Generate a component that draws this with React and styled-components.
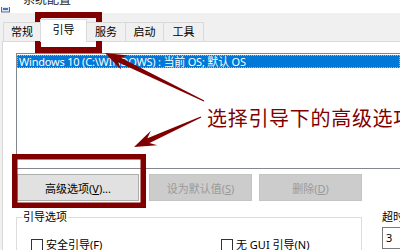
import styled, { createGlobalStyle } from "styled-components";

const Global = createGlobalStyle`
  html, body { margin: 0; padding: 0; background: #fff; }
  body { font-family: "Noto Sans", "Noto Sans CJK SC", sans-serif; }
`;

const RED = "#800000";

const Window = styled.div`
  position: relative;
  width: 400px;
  height: 250px;
  overflow: hidden;
  background: #f0f0f0;
  display: flex;
  flex-direction: column;
  font-size: 11px;
  color: #000;
`;

const TitleBar = styled.div`
  height: 13px;
  flex: none;
  background: #fff;
  display: flex;
  align-items: flex-end;
  gap: 12px;
  padding-left: 1px;
  overflow: hidden;
`;

const TitleText = styled.span`
  font-size: 12px;
  line-height: 14px;
  margin-bottom: 6px;
  color: #222;
`;

const TabStrip = styled.div`
  height: 28px;
  flex: none;
  display: flex;
  align-items: flex-end;
  padding-left: 3px;
`;

const Tab = styled.div`
  position: relative;
  width: ${(p) => p.$w}px;
  height: ${(p) => (p.$active ? 23 : 19)}px;
  margin-left: -1px;
  margin-bottom: ${(p) => (p.$active ? -1 : 0)}px;
  z-index: ${(p) => (p.$active ? 2 : 1)};
  box-sizing: border-box;
  border: 1px solid #d9d9d9;
  border-bottom: none;
  background: ${(p) => (p.$active ? "#fff" : "#f0f0f0")};
  display: flex;
  justify-content: center;
  align-items: ${(p) => (p.$active ? "flex-start" : "center")};
  padding-top: ${(p) => (p.$active ? 3 : 0)}px;
  font-size: 11px;
  line-height: 14px;
  &:first-child { margin-left: 0; }
`;

const Panel = styled.div`
  flex: 1;
  margin-left: 2px;
  background: #fff;
  border-top: 1px solid #d9d9d9;
  border-left: 1px solid #d9d9d9;
  padding: 11px 0 0 13px;
  display: flex;
  flex-direction: column;
`;

const ListBox = styled.div`
  height: 113px;
  flex: none;
  border: 1px solid #828790;
  border-right: none;
  padding-top: 1px;
`;

const Row = styled.div`
  height: 13px;
  line-height: 13px;
  padding-left: 2px;
  background: ${(p) => (p.$selected ? "#0078d7" : "transparent")};
  color: ${(p) => (p.$selected ? "#fff" : "#000")};
  font-size: 11px;
  letter-spacing: -0.2px;
  white-space: nowrap;
  outline: ${(p) => (p.$selected ? "1px dotted #f3a35c" : "none")};
  outline-offset: -1px;
`;

const ButtonRow = styled.div`
  display: flex;
  margin-top: 5px;
  padding-left: 1px;
`;

const Button = styled.div`
  width: ${(p) => p.$w}px;
  height: 27px;
  margin-left: ${(p) => p.$ml || 0}px;
  box-sizing: border-box;
  border: 1px solid ${(p) => (p.$disabled ? "#c4c4c4" : "#adadad")};
  background: ${(p) => (p.$disabled ? "#cccccc" : "#e1e1e1")};
  color: ${(p) => (p.$disabled ? "#9a9a9a" : "#000")};
  display: flex;
  align-items: center;
  justify-content: center;
  font-size: 11px;
  u { text-decoration: underline; }
`;

const BottomRow = styled.div`
  display: flex;
  gap: 20px;
  margin-top: 8px;
`;

const GroupBox = styled.div`
  width: 346px;
  height: 60px;
  margin-top: 8px;
  box-sizing: border-box;
  border: 1px solid #dcdcdc;
  border-bottom: none;
`;

const Legend = styled.div`
  width: fit-content;
  margin: -9px 0 0 5px;
  padding: 0 1px;
  background: #fff;
  line-height: 16px;
  font-size: 11px;
`;

const CheckRow = styled.div`
  display: flex;
  padding: 12px 0 0 14px;
`;

const CheckItem = styled.label`
  width: ${(p) => p.$w}px;
  display: flex;
  align-items: center;
  gap: 3px;
  font-size: 11px;
  line-height: 16px;
  u { text-decoration: underline; }
`;

const Box = styled.span`
  width: 10px;
  height: 10px;
  border: 1px solid #333;
  background: #fff;
  flex: none;
`;

const TimeoutCol = styled.div`
  display: flex;
  flex-direction: column;
  font-size: 11px;
  line-height: 16px;
`;

const Field = styled.div`
  width: 60px;
  height: 22px;
  margin-top: 2px;
  box-sizing: border-box;
  border: 1px solid #7a7a7a;
  padding-left: 3px;
  line-height: 19px;
`;

const Overlay = styled.svg`
  position: absolute;
  left: 0;
  top: 0;
  pointer-events: none;
`;

const Note = styled.div`
  position: absolute;
  left: 207px;
  top: 105px;
  font-family: "Noto Sans CJK SC", sans-serif;
  font-size: 20px;
  line-height: 26px;
  letter-spacing: 0.7px;
  color: ${RED};
  white-space: nowrap;
`;

function arrowPoints(tip, tail, headLen = 22, headHalf = 8, neck = 2.6, tailHalf = 0.7) {
  const dx = tail[0] - tip[0];
  const dy = tail[1] - tip[1];
  const len = Math.hypot(dx, dy);
  const ux = dx / len, uy = dy / len;
  const px = -uy, py = ux;
  const at = (d, w) => [tip[0] + ux * d + px * w, tip[1] + uy * d + py * w];
  const pts = [
    tip,
    at(headLen, headHalf),
    at(headLen * 0.72, neck),
    [tail[0] + px * tailHalf, tail[1] + py * tailHalf],
    [tail[0] - px * tailHalf, tail[1] - py * tailHalf],
    at(headLen * 0.72, -neck),
    at(headLen, -headHalf),
  ];
  return pts.map((p) => p.map((v) => v.toFixed(1)).join(",")).join(" ");
}

const tabs = [
  { label: "常规", w: 38 },
  { label: "引导", w: 47, active: true },
  { label: "服务", w: 40 },
  { label: "启动", w: 39 },
  { label: "工具", w: 41 },
];

export default function App() {
  return (
    <>
      <Global />
      <Window>
        <TitleBar>
          <svg width="10" height="6" viewBox="0 0 10 6">
            <rect x="0.5" y="-4" width="8" height="9" fill="#dfe6ee" stroke="#5a6b80" />
            <rect x="2" y="1" width="5" height="2" fill="#3b78c4" />
          </svg>
          <TitleText>系统配置</TitleText>
        </TitleBar>
        <TabStrip>
          {tabs.map((t) => (
            <Tab key={t.label} $w={t.w} $active={t.active}>
              {t.label}
            </Tab>
          ))}
        </TabStrip>
        <Panel>
          <ListBox>
            <Row $selected>Windows 10 (C:\WINDOWS) : 当前 OS; 默认 OS</Row>
          </ListBox>
          <ButtonRow>
            <Button $w={122}>
              <span>高级选项(<u>V</u>)...</span>
            </Button>
            <Button $w={103} $ml={10} $disabled>
              <span>设为默认值(<u>S</u>)</span>
            </Button>
            <Button $w={103} $ml={7} $disabled>
              <span>删除(<u>D</u>)</span>
            </Button>
          </ButtonRow>
          <BottomRow>
            <GroupBox>
              <Legend>引导选项</Legend>
              <CheckRow>
                <CheckItem $w={190}>
                  <Box />
                  <span>安全引导(<u>F</u>)</span>
                </CheckItem>
                <CheckItem $w={140}>
                  <Box />
                  <span>无 GUI 引导(<u>N</u>)</span>
                </CheckItem>
              </CheckRow>
            </GroupBox>
            <TimeoutCol>
              <span>超时(T):</span>
              <Field>3</Field>
            </TimeoutCol>
          </BottomRow>
        </Panel>

        <Overlay width="400" height="250" viewBox="0 0 400 250">
          <rect x="38" y="15" width="61" height="35" fill="none" stroke={RED} strokeWidth="6" />
          <rect x="14.75" y="156.75" width="128.5" height="48.5" fill="none" stroke={RED} strokeWidth="5.5" />
          <polygon points={arrowPoints([105, 53], [204, 101])} fill={RED} />
          <polygon points={arrowPoints([134, 147], [201, 117])} fill={RED} />
        </Overlay>
        <Note>选择引导下的高级选项</Note>
      </Window>
    </>
  );
}
